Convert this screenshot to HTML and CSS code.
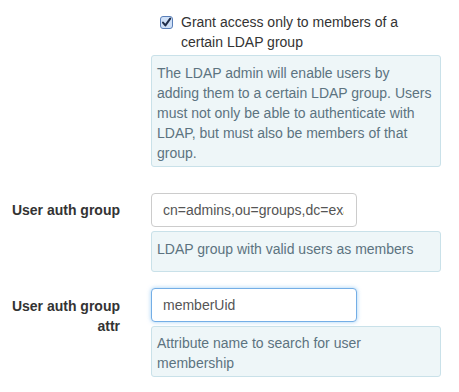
FILE: index.html
```html
<!DOCTYPE html>
<html>
<head>
<meta charset="utf-8">
<link rel="stylesheet" href="styles.css">
</head>
<body>
<form class="form">
  <div class="row row-check">
    <div class="label"></div>
    <div class="controls">
      <label class="check">
        <span class="box">
          <svg width="13" height="13" viewBox="0 0 13 13">
            <rect x="0.5" y="0.5" width="12" height="12" rx="2.5" fill="#cfe0f7" stroke="#5a7fb8"/>
            <path d="M3 6.6 L5.4 9.4 L10.2 2.6" fill="none" stroke="#1f2d4a" stroke-width="2" stroke-linecap="round" stroke-linejoin="round"/>
          </svg>
        </span>
        <span class="check-text">Grant access only to members of a certain LDAP group</span>
      </label>
      <div class="help">The LDAP admin will enable users by adding them to a certain LDAP group. Users must not only be able to authenticate with LDAP, but must also be members of that group.</div>
    </div>
  </div>
  <div class="row row-group">
    <div class="label">User auth group</div>
    <div class="controls">
      <input class="input" type="text" value="cn=admins,ou=groups,dc=example,dc=com">
      <div class="help help-single">LDAP group with valid users as members</div>
    </div>
  </div>
  <div class="row row-attr">
    <div class="label">User auth group attr</div>
    <div class="controls">
      <input class="input input-focus" type="text" value="memberUid">
      <div class="help">Attribute name to search for user membership</div>
    </div>
  </div>
</form>
</body>
</html>
```
FILE: styles.css
```css
html, body {
  margin: 0;
  padding: 0;
  background: #fff;
}
body {
  font-family: "Liberation Sans", Arial, sans-serif;
  font-size: 14px;
  line-height: 20px;
  color: #333;
}
.form {
  padding: 12px 19px 0 0;
}
.row {
  display: grid;
  grid-template-columns: 120px 290px;
  column-gap: 31px;
}
.label {
  text-align: right;
  font-weight: bold;
  color: #333;
  padding-top: 7px;
  box-sizing: border-box;
}
.row-attr .label {
  padding-left: 10px;
  padding-top: 8px;
}
.row-group {
  margin-top: 26px;
}
.row-attr {
  margin-top: 16px;
}
.check {
  display: flex;
  align-items: flex-start;
  padding-left: 9px;
}
.box {
  display: block;
  width: 13px;
  height: 13px;
  margin-top: 4px;
  margin-right: 8px;
  flex: none;
}
.box svg {
  display: block;
}
.check-text {
  color: #333;
  width: 250px;
}
.help {
  margin-top: 3px;
  background: #eef6f8;
  border: 1px solid #c9e1e9;
  border-radius: 3px;
  color: #5c7380;
  padding: 7px 5px 3px 5px;
}
.help-single {
  padding-bottom: 12px;
  margin-top: 4px;
}
.row-attr .help {
  margin-top: 4px;
  padding-top: 6px;
  padding-bottom: 3px;
}
.input {
  display: block;
  box-sizing: border-box;
  width: 206px;
  height: 34px;
  margin: 0;
  padding: 0 12px 0 11px;
  border: 1px solid #ccc;
  border-radius: 4px;
  font-family: "Liberation Sans", Arial, sans-serif;
  font-size: 14px;
  color: #555;
  background: #fff;
  outline: none;
}
.input-focus {
  border-color: #74aee6;
  box-shadow: 0 0 4px rgba(82, 168, 236, 0.55);
}
```
